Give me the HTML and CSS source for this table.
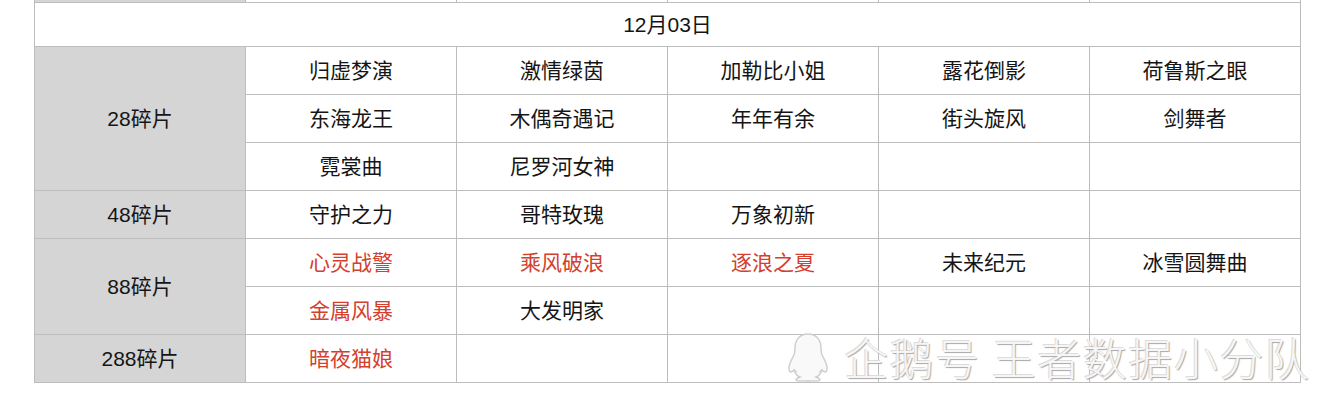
FILE: index.html
```html
<!DOCTYPE html>
<html lang="zh">
<head>
<meta charset="utf-8">
<title>碎片</title>
<link rel="stylesheet" href="styles.css">
</head>
<body>
<div class="page">
<table class="grid">
  <colgroup><col><col><col><col><col><col></colgroup>
  <tr class="stub"><td class="lbl"></td><td></td><td></td><td></td><td></td><td></td></tr>
  <tr class="date"><td colspan="6">12月03日</td></tr>
  <tr><td class="lbl" rowspan="3">28碎片</td><td>归虚梦演</td><td>激情绿茵</td><td>加勒比小姐</td><td>露花倒影</td><td>荷鲁斯之眼</td></tr>
  <tr><td>东海龙王</td><td>木偶奇遇记</td><td>年年有余</td><td>街头旋风</td><td>剑舞者</td></tr>
  <tr><td>霓裳曲</td><td>尼罗河女神</td><td></td><td></td><td></td></tr>
  <tr><td class="lbl">48碎片</td><td>守护之力</td><td>哥特玫瑰</td><td>万象初新</td><td></td><td></td></tr>
  <tr><td class="lbl" rowspan="2">88碎片</td><td class="red">心灵战警</td><td class="red">乘风破浪</td><td class="red">逐浪之夏</td><td>未来纪元</td><td>冰雪圆舞曲</td></tr>
  <tr><td class="red">金属风暴</td><td>大发明家</td><td></td><td></td><td></td></tr>
  <tr><td class="lbl">288碎片</td><td class="red">暗夜猫娘</td><td></td><td></td><td></td><td></td></tr>
</table>
<div class="mark">
  <svg class="peng" width="44" height="50" viewBox="0 0 44 50">
    <path d="M22 2c-9 0-13 7-13 14 0 3 0 5-1 7-2 4-5 8-5 13 0 3 1 4 2 4 1 0 2-1 3-2 1 3 3 6 6 7-3 1-4 2-4 3 0 1 3 1 12 1s12 0 12-1c0-1-1-2-4-3 3-1 5-4 6-7 1 1 2 2 3 2 1 0 2-1 2-4 0-5-3-9-5-13-1-2-1-4-1-7 0-7-4-14-13-14z" fill="#f9f9f9" stroke="#cdcdcd" stroke-width="1.4"/>
    <path d="M8 37c1 2 2 3 3 3M36 37c-1 2-2 3-3 3" fill="none" stroke="#c8c8c8" stroke-width="1"/>
  </svg>
  <span class="mtext">企鹅号 王者数据小分队</span>
</div>
</div>
</body>
</html>
```
FILE: styles.css
```css
html, body {
  margin: 0;
  padding: 0;
  background: #ffffff;
}
.page {
  position: relative;
  width: 1334px;
  height: 406px;
  overflow: hidden;
  font-family: "Liberation Sans", "Noto Sans CJK SC", sans-serif;
}
.grid {
  border-collapse: collapse;
  margin-left: 34px;
  table-layout: fixed;
  width: 1267px;
  color: #151515;
  font-size: 21px;
}
.grid col {
  width: 211px;
}
.grid td {
  border: 1px solid #bdbdbd;
  padding: 0;
  height: 48px;
  text-align: center;
  vertical-align: middle;
  box-sizing: border-box;
  line-height: 1;
}
.grid tr.stub td {
  height: 2px;
  border-top: none;
}
.grid tr.date td {
  height: 44px;
}
.grid td.lbl {
  background: #d5d5d5;
}
.grid td.red {
  color: #d3402e;
}
.mark {
  position: absolute;
  left: 786px;
  top: 332px;
  display: flex;
  align-items: center;
  gap: 14px;
}
.peng {
  display: block;
}
.mtext {
  font-family: "Noto Sans CJK SC", sans-serif;
  font-weight: 300;
  font-size: 44px;
  line-height: 50px;
  color: #f6f6f6;
  text-shadow: 1px 1px 1px #a8a8a8, -1px -1px 0 #dcdcdc;
  letter-spacing: 1.5px;
}
```
